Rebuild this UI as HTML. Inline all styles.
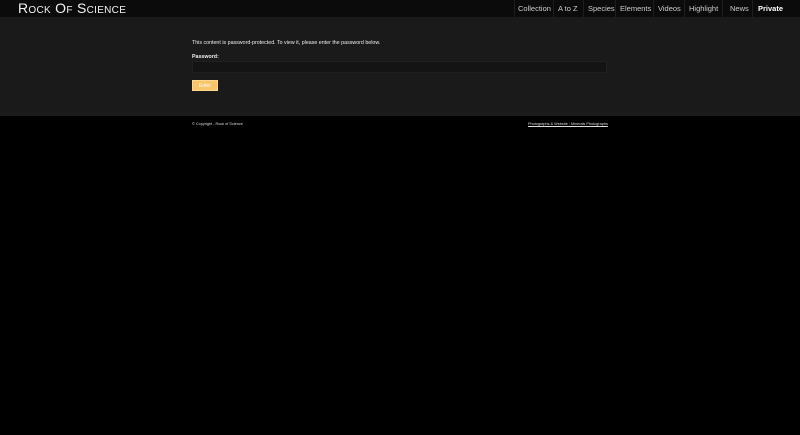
<!DOCTYPE html>
<html><head><style>
*{margin:0;padding:0;box-sizing:border-box}
body{width:800px;height:435px;background:#000;font-family:"Liberation Sans",sans-serif;color:#fff;position:relative;overflow:hidden}
.hdr{position:absolute;left:0;top:0;width:800px;height:17px;background:#0b0b0b}
.logo{position:absolute;left:18px;top:0px;font-size:14px;line-height:17px;font-variant:small-caps;letter-spacing:0.3px;color:#f2f2f2}
.nav{position:absolute;top:0;height:17px;font-size:7.5px;line-height:17px;color:#ccc}
.sep{position:absolute;top:0;width:1px;height:17px;background:#1e1e1e}
.main{position:absolute;left:0;top:17px;width:800px;height:99px;background:#1a1a1a}
.t{position:absolute;font-size:5.3px;color:#eee}
.inp{position:absolute;left:192px;top:61px;width:415px;height:12px;background:#141414;border:1px solid #202020}
.btn{position:absolute;left:192px;top:80px;width:26px;height:11px;background:#f9c56a;border:1px solid #ffd98a;color:#fff;font-size:5px;text-align:center;line-height:10px}
.f{position:absolute;top:122px;font-size:3.8px;color:#ddd}
</style></head><body>
<div class="hdr">
<div class="logo">Rock Of Science</div>
<div class="sep" style="left:514px"></div><div class="nav" style="left:518px">Collection</div>
<div class="sep" style="left:553px"></div><div class="nav" style="left:558px">A to Z</div>
<div class="sep" style="left:583px"></div><div class="nav" style="left:588px">Species</div>
<div class="sep" style="left:615px"></div><div class="nav" style="left:620px">Elements</div>
<div class="sep" style="left:653px"></div><div class="nav" style="left:658px">Videos</div>
<div class="sep" style="left:684px"></div><div class="nav" style="left:689px">Highlight</div>
<div class="sep" style="left:722px"></div><div class="nav" style="left:730px">News</div>
<div class="sep" style="left:752px"></div><div class="nav" style="left:758px;color:#fff;font-weight:bold">Private</div>
</div>
<div class="main"></div>
<div class="t" style="left:192px;top:40px">This content is password-protected. To view it, please enter the password below.</div>
<div class="t" style="left:192px;top:54px;font-weight:bold">Password:</div>
<div class="inp"></div>
<div class="btn">Enter</div>
<div class="f" style="left:192px">© Copyright - Rock of Science</div>
<div class="f" style="left:528px;text-decoration:underline">Photographs &amp; Website : Minerals Photographs</div>
</body></html>
